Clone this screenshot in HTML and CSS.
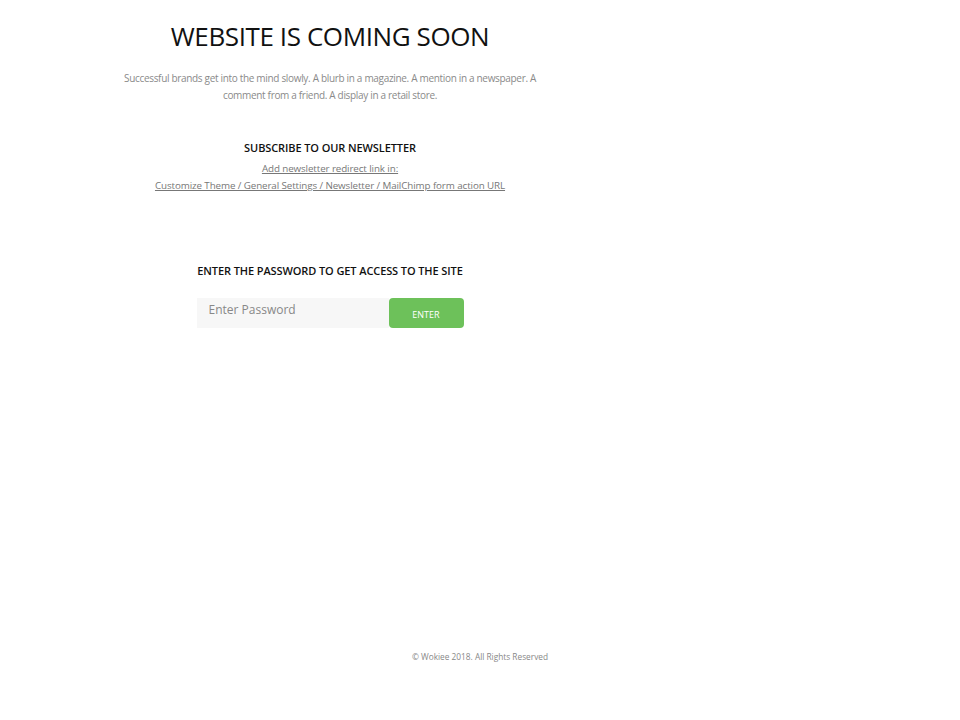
FILE: index.html
```html
<!DOCTYPE html>
<html lang="en">
<head>
<meta charset="utf-8">
<title>Website is coming soon</title>
<link rel="stylesheet" href="styles.css">
</head>
<body>
<div class="page">
  <main class="layout">
    <section class="content">
      <h1 class="title">WEBSITE IS COMING SOON</h1>
      <p class="blurb">Successful brands get into the mind slowly. A blurb in a magazine. A mention in a newspaper. A comment from a friend. A display in a retail store.</p>
      <div class="newsletter">
        <h2 class="subtitle">SUBSCRIBE TO OUR NEWSLETTER</h2>
        <a class="note" href="#">Add newsletter redirect link in:</a>
        <a class="note" href="#">Customize Theme / General Settings / Newsletter / MailChimp form action URL</a>
      </div>
      <div class="password">
        <h2 class="subtitle">ENTER THE PASSWORD TO GET ACCESS TO THE SITE</h2>
        <form class="pw-form">
          <input class="pw-input" type="password" placeholder="Enter Password">
          <button class="pw-btn" type="button">ENTER</button>
        </form>
      </div>
    </section>
    <aside class="side"></aside>
  </main>
  <footer class="footer">© Wokiee 2018. All Rights Reserved</footer>
</div>
</body>
</html>
```
FILE: styles.css
```css
* { box-sizing: border-box; }
html, body { margin: 0; padding: 0; background: #fff; }
body { font-family: "Open Sans", "Noto Sans", sans-serif; color: #222; }
.page { height: 720px; display: flex; flex-direction: column; }
.layout { display: grid; grid-template-columns: 660px 1fr; flex: 1; }
.content { display: flex; flex-direction: column; align-items: center; padding-top: 18px; text-align: center; }
.title { margin: 0; font-size: 26px; font-weight: 400; letter-spacing: -0.4px; line-height: 36px; color: #111; }
.blurb { margin: 16px 0 0; width: 424px; font-size: 10px; letter-spacing: -0.32px; line-height: 17px; color: #8a8a8a; font-weight: 400; }
.newsletter { margin-top: 36px; display: flex; flex-direction: column; align-items: center; }
.subtitle { margin: 0; font-size: 11px; font-weight: 600; letter-spacing: -0.1px; line-height: 16px; color: #111; }
.note { font-size: 9.8px; letter-spacing: -0.1px; line-height: 17px; color: #777; text-decoration: underline; }
.newsletter .subtitle { margin-bottom: 4px; }
.password { margin-top: 69px; display: flex; flex-direction: column; align-items: center; }
.pw-form { margin-top: 19px; display: flex; }
.pw-input { width: 192px; height: 30px; border: none; background: #f7f7f7; padding: 0 12px 8px; font-family: inherit; font-size: 12px; color: #333; outline: none; }
.pw-input::placeholder { color: #888; }
.pw-btn { width: 75px; height: 30px; border: none; border-radius: 4px; background: #6dc15a; color: #fff; font-family: inherit; font-size: 9px; padding: 2px 0 0; }
.footer { height: 69px; text-align: center; font-size: 8.3px; line-height: 12px; color: #888; }
```
